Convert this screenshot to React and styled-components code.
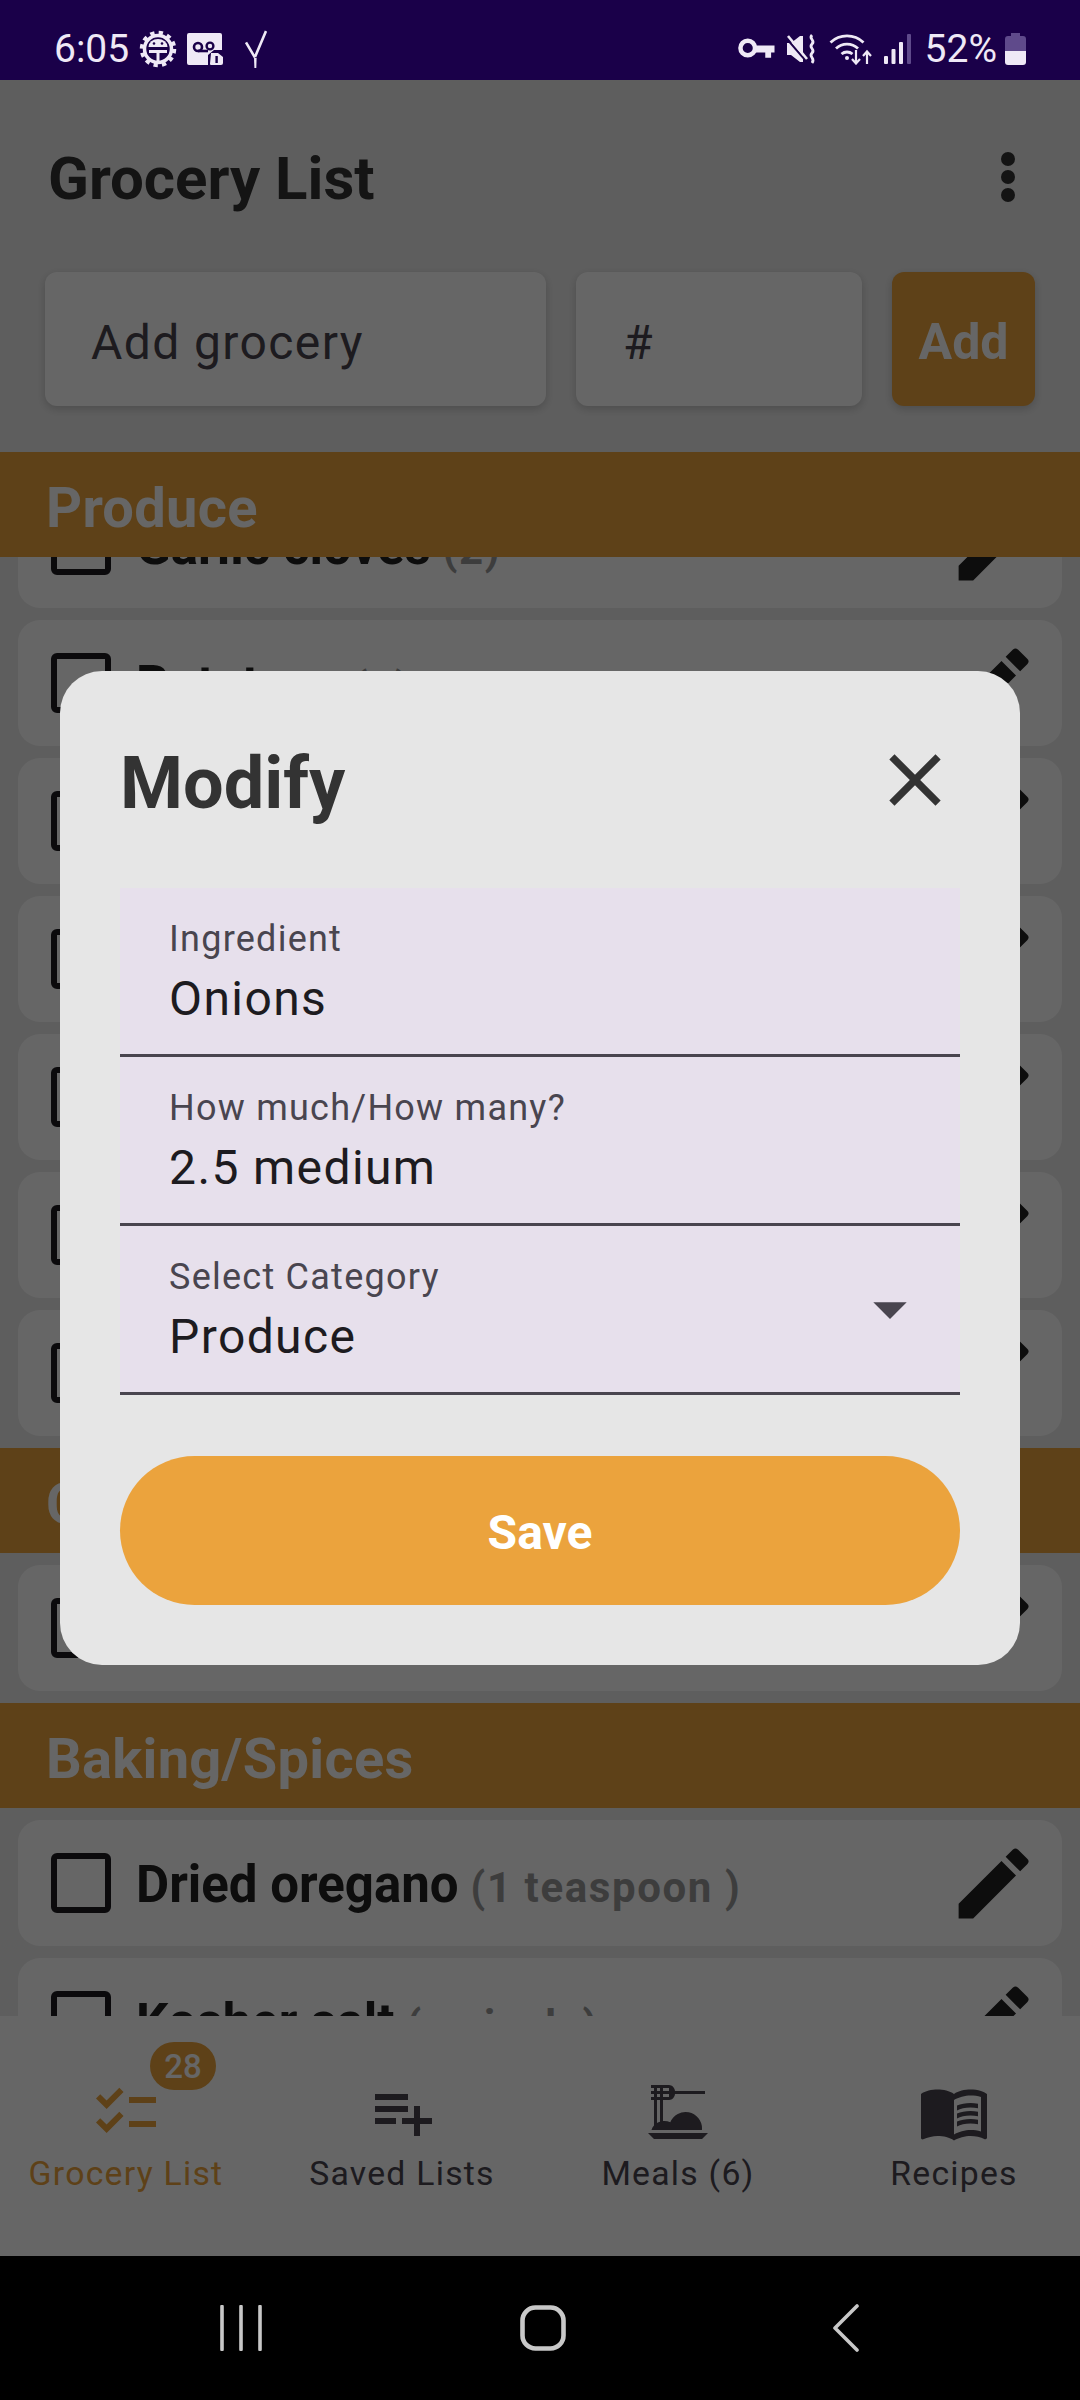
import React from 'react';
import styled, { createGlobalStyle } from 'styled-components';
import { MdChecklist, MdPlaylistAdd, MdDinnerDining, MdMenuBook, MdEdit, MdClose, MdArrowDropDown } from 'react-icons/md';

const GlobalStyle = createGlobalStyle`
  html, body { margin: 0; padding: 0; background: #000; }
  * { box-sizing: border-box; }
  body { font-family: Roboto, "Liberation Sans", sans-serif; }
`;

const Screen = styled.div`
  width: 1080px;
  height: 2400px;
  display: flex;
  flex-direction: column;
  overflow: hidden;
`;

const StatusBar = styled.div`
  height: 80px;
  flex: none;
  background: #1a0049;
  color: #efe9f6;
  font-size: 39px;
  display: flex;
  align-items: center;
  justify-content: space-between;
  padding: 18px 54px 0 54px;
`;

const StatusGroup = styled.div`
  display: flex;
  align-items: center;
  gap: ${(p) => p.$gap || 10}px;
  svg { display: block; flex: none; }
`;

const TickGap = styled.span`
  width: 2px;
`;

const Main = styled.div`
  position: relative;
  flex: 1;
  min-height: 0;
  display: flex;
  flex-direction: column;
  background: #ebebeb;
`;

const Header = styled.header`
  height: 192px;
  flex: none;
  display: flex;
  align-items: center;
  justify-content: space-between;
  padding: 0 65px 0 48px;
`;

const Title = styled.h1`
  margin: 4px 0 0;
  font-size: 60px;
  font-weight: 700;
  color: #333;
`;

const Dots = styled.div`
  display: flex;
  flex-direction: column;
  gap: 4px;
  margin-top: 2px;
  span {
    width: 14px;
    height: 14px;
    border-radius: 50%;
    background: #333;
  }
`;

const InputRow = styled.div`
  display: flex;
  gap: 30px;
  height: 134px;
  flex: none;
  padding: 0 45px;
  margin-bottom: 46px;
`;

const FakeInput = styled.div`
  width: ${(p) => p.$width}px;
  background: #fff;
  border-radius: 12px;
  box-shadow: 0 3px 8px rgba(0, 0, 0, 0.18);
  display: flex;
  align-items: center;
  padding: 7px 0 0 ${(p) => p.$pad}px;
  font-size: 48px;
  letter-spacing: 1.4px;
  color: #49454f;
`;

const AddButton = styled.button`
  width: 143px;
  border: 0;
  padding: 5px 0 0;
  border-radius: 12px;
  background: #eba33d;
  color: #fff;
  font: 700 50px Roboto, sans-serif;
  box-shadow: 0 3px 8px rgba(0, 0, 0, 0.18);
`;

const Scroller = styled.div`
  flex: 1;
  min-height: 0;
  overflow: hidden;
`;

const SectionHeader = styled.div`
  position: sticky;
  top: 0;
  z-index: 1;
  height: 105px;
  background: #eba33d;
  color: #fff;
  font-size: 56px;
  font-weight: 700;
  letter-spacing: 0.3px;
  display: flex;
  align-items: center;
  padding: 6px 0 0 46px;
`;

const Rows = styled.div`
  display: flex;
  flex-direction: column;
  gap: 12px;
  padding: 0 18px;
  margin-top: ${(p) => p.$top}px;
  margin-bottom: 12px;
`;

const Row = styled.div`
  height: 126px;
  flex: none;
  background: #fff;
  border-radius: 22px;
  display: flex;
  align-items: center;
  padding: 0 22px 0 33px;
`;

const Check = styled.span`
  width: 60px;
  height: 60px;
  flex: none;
  border: 6px solid #1d1b20;
  border-radius: 6px;
  margin-right: 25px;
`;

const ItemName = styled.span`
  margin-top: 3px;
  font-size: 51px;
  font-weight: 700;
  color: #222;
`;

const ItemAmount = styled.span`
  font-size: 42px;
  font-weight: 700;
  color: #999;
  letter-spacing: 1.6px;
  margin: 8px 0 0 12px;
`;

const EditIcon = styled(MdEdit)`
  margin-left: auto;
  font-size: 93px;
  color: #222;
  flex: none;
`;

const BottomNav = styled.nav`
  height: 240px;
  flex: none;
  background: #fff;
  display: flex;
  justify-content: space-between;
`;

const NavItem = styled.div`
  position: relative;
  width: 252px;
  display: flex;
  flex-direction: column;
  align-items: center;
  padding-top: 60px;
  color: ${(p) => (p.$active ? '#eba33d' : '#49454f')};
  font-size: 33.75px;
  letter-spacing: 1.25px;
  svg { display: block; font-size: 72px; }
`;

const NavLabel = styled.span`
  margin-top: 6px;
  line-height: 40px;
`;

const Badge = styled.span`
  position: absolute;
  left: 150px;
  top: 26px;
  width: 66px;
  height: 48px;
  border-radius: 24px;
  background: #eba33d;
  color: #fff;
  font-size: 33px;
  font-weight: 500;
  letter-spacing: 0;
  display: flex;
  align-items: center;
  justify-content: center;
`;

const Scrim = styled.div`
  position: absolute;
  inset: 0;
  z-index: 5;
  background: rgba(0, 0, 0, 0.6);
  display: flex;
  align-items: center;
  justify-content: center;
`;

const Dialog = styled.div`
  width: 960px;
  height: 994px;
  background: #e6e6e6;
  border-radius: 42px;
  padding: 60px;
  display: flex;
  flex-direction: column;
`;

const DialogTop = styled.div`
  height: 157px;
  flex: none;
  display: flex;
  justify-content: space-between;
  align-items: flex-start;
`;

const DialogTitle = styled.h2`
  margin: 12px 0 0;
  font-size: 72px;
  font-weight: 700;
  line-height: 82px;
  color: #333;
`;

const CloseIcon = styled(MdClose)`
  font-size: 88px;
  color: #333;
  margin: 5px 1px 0 0;
`;

const Field = styled.div`
  position: relative;
  height: 169px;
  flex: none;
  background: #e7e0ec;
  border-bottom: 3px solid #49454f;
  padding: 31px 50px 0 49px;
`;

const FieldLabel = styled.div`
  font-size: 36px;
  line-height: 40px;
  letter-spacing: 1.25px;
  color: #49454f;
`;

const FieldValue = styled.div`
  margin-top: 13px;
  font-size: 48px;
  line-height: 54px;
  letter-spacing: 1.4px;
  color: #1d1b20;
`;

const Arrow = styled(MdArrowDropDown)`
  position: absolute;
  right: 30px;
  top: 43px;
  font-size: 80px;
  color: #49454f;
`;

const SaveButton = styled.button`
  margin-top: 61px;
  height: 149px;
  flex: none;
  border: 0;
  padding: 3px 0 0;
  border-radius: 75px;
  background: #eba33d;
  color: #fff;
  font: 700 48px Roboto, sans-serif;
`;

const SystemNav = styled.div`
  height: 144px;
  flex: none;
  background: #000;
  display: flex;
  align-items: center;
  padding: 0 221px 0 220px;
  justify-content: space-between;
  svg { display: block; }
  svg:nth-child(2) { margin-right: 9px; }
`;

const BatteryText = styled.span`
  margin-left: 3px;
  margin-right: -3px;
`;

const fg = '#efe9f6';

function GearIcon() {
  return (
    <svg width="38" height="38" viewBox="0 0 38 38">
      <circle cx="19" cy="19" r="16" fill="none" stroke={fg} strokeWidth="4.5" strokeDasharray="4.2 4.2" />
      <circle cx="19" cy="19" r="13.5" fill="none" stroke={fg} strokeWidth="3.5" />
      <path d="M9.5 17a9.5 8 0 0 1 19 0z" fill={fg} />
      <circle cx="15" cy="13.5" r="1.3" fill="#1a0049" />
      <circle cx="23" cy="13.5" r="1.3" fill="#1a0049" />
      <path d="M10 20h18v3h-7.5v9h-3v-9H10z" fill={fg} />
    </svg>
  );
}

function VoicemailIcon() {
  return (
    <svg width="36" height="32" viewBox="0 0 36 32">
      <path d="M2 0h31a2 2 0 0 1 2 2v15H27l-6 5v10H2a2 2 0 0 1-2-2V2a2 2 0 0 1 2-2z" fill={fg} />
      <path d="M24 20h7l5 4v6a2 2 0 0 1-2 2H24a1 1 0 0 1-1-1z" fill={fg} />
      <circle cx="11" cy="14" r="4" fill="none" stroke="#1a0049" strokeWidth="2.6" />
      <circle cx="23" cy="13" r="3.4" fill="none" stroke="#1a0049" strokeWidth="2.4" />
      <path d="M11 18h10" stroke="#1a0049" strokeWidth="2.6" />
      <rect x="28.4" y="23" width="2.4" height="7" fill="#1a0049" />
    </svg>
  );
}

function TickIcon() {
  return (
    <svg width="22" height="38" viewBox="0 0 22 38">
      <path d="M1 12.5l9 15M21 1L10 27" fill="none" stroke={fg} strokeWidth="2.6" />
      <path d="M9 28h2.6l-.3 10H9.4z" fill={fg} />
    </svg>
  );
}

function KeyIcon() {
  return (
    <svg width="37" height="22" viewBox="0 0 38 22">
      <circle cx="10" cy="10" r="7.5" fill="none" stroke={fg} strokeWidth="4.6" />
      <path d="M17 7.5h20.5v7H34v5.5h-6v-5.5H17z" fill={fg} />
    </svg>
  );
}

function MuteIcon() {
  return (
    <svg width="32" height="32" viewBox="0 0 32 30">
      <path d="M1 9h4L14 2h3v26h-3l-9-7H1z" fill={fg} />
      <path d="M0 4l20 23" stroke="#1a0049" strokeWidth="2" />
      <path d="M2 2l19 23" stroke={fg} strokeWidth="2.6" />
      <path d="M26 1c-4 4 4 5 0 9s4 5 0 9 4 5 0 10" fill="none" stroke={fg} strokeWidth="2.8" />
    </svg>
  );
}

function WifiIcon() {
  return (
    <svg width="44" height="32" viewBox="0 0 44 32">
      <g fill="none" stroke={fg} strokeWidth="2.8">
        <path d="M1.5 9.5a24 24 0 0 1 33 0" />
        <path d="M7 15.5a16 16 0 0 1 22 0" />
        <path d="M12.5 21a8.5 8.5 0 0 1 11 0" />
      </g>
      <circle cx="18" cy="25" r="2" fill={fg} />
      <path d="M27 17v13M23 26l4 4.5 4-4.5M38 31V19M34 23l4-4.5 4 4.5" fill="none" stroke={fg} strokeWidth="2.2" />
    </svg>
  );
}

function SignalIcon() {
  return (
    <svg width="27" height="30" viewBox="0 0 27 30">
      <rect x="0" y="22" width="4" height="8" rx="1" fill={fg} />
      <rect x="7.5" y="15" width="4" height="15" rx="1" fill={fg} />
      <rect x="15" y="8" width="4" height="22" rx="1" fill={fg} />
      <rect x="23" y="0" width="4" height="30" rx="1" fill="#5f4a8b" />
    </svg>
  );
}

function BatteryIcon() {
  return (
    <svg width="21" height="32" viewBox="0 0 21 32">
      <path d="M6 0h9v3h3a3 3 0 0 1 3 3v12H0V6a3 3 0 0 1 3-3h3z" fill="#5f4a8b" />
      <path d="M0 18h21v11a3 3 0 0 1-3 3H3a3 3 0 0 1-3-3z" fill={fg} />
    </svg>
  );
}

function RecentsIcon() {
  return (
    <svg width="42" height="46" viewBox="0 0 42 46">
      <path d="M2 1.5v43M21 1.5v43M40 1.5v43" stroke="#c8c8c8" strokeWidth="3.6" strokeLinecap="round" />
    </svg>
  );
}

function HomeIcon() {
  return (
    <svg width="46" height="46" viewBox="0 0 46 46">
      <rect x="2.5" y="2.5" width="41" height="41" rx="13" fill="none" stroke="#c8c8c8" strokeWidth="4.6" />
    </svg>
  );
}

function BackIcon() {
  return (
    <svg width="26" height="48" viewBox="0 0 26 48">
      <path d="M24 2L2 24l22 22" fill="none" stroke="#c8c8c8" strokeWidth="3.6" strokeLinecap="round" strokeLinejoin="round" />
    </svg>
  );
}

const sections = [
  {
    title: 'Produce',
    top: -75,
    items: [
      ['Garlic cloves', '(2)'],
      ['Potatoes', '(4)'],
      ['Onions', '(2.5 medium )'],
      ['Carrots', '(3)'],
      ['Celery', '(2 stalks )'],
      ['Tomatoes', '(4)'],
      ['Lemons', '(2)'],
    ],
  },
  { title: 'Canned Goods', top: 12, items: [['Tomato paste', '(1 can )']] },
  {
    title: 'Baking/Spices',
    top: 12,
    items: [
      ['Dried oregano', '(1 teaspoon )'],
      ['Kosher salt', '(a pinch )'],
    ],
  },
];

const navItems = [
  { label: 'Grocery List', Icon: MdChecklist, active: true, badge: 28 },
  { label: 'Saved Lists', Icon: MdPlaylistAdd },
  { label: 'Meals (6)', Icon: MdDinnerDining },
  { label: 'Recipes', Icon: MdMenuBook },
];

const fields = [
  { label: 'Ingredient', value: 'Onions' },
  { label: 'How much/How many?', value: '2.5 medium' },
  { label: 'Select Category', value: 'Produce', select: true },
];

export default function App() {
  return (
    <Screen>
      <GlobalStyle />
      <StatusBar>
        <StatusGroup>
          <span>6:05</span>
          <GearIcon />
          <VoicemailIcon />
          <TickGap />
          <TickIcon />
        </StatusGroup>
        <StatusGroup $gap={11}>
          <KeyIcon />
          <MuteIcon />
          <WifiIcon />
          <SignalIcon />
          <BatteryText>52%</BatteryText>
          <BatteryIcon />
        </StatusGroup>
      </StatusBar>
      <Main>
        <Header>
          <Title>Grocery List</Title>
          <Dots><span /><span /><span /></Dots>
        </Header>
        <InputRow>
          <FakeInput $width={501} $pad={46}>Add grocery</FakeInput>
          <FakeInput $width={286} $pad={47}>#</FakeInput>
          <AddButton>Add</AddButton>
        </InputRow>
        <Scroller>
          {sections.map((section) => (
            <React.Fragment key={section.title}>
              <SectionHeader>{section.title}</SectionHeader>
              <Rows $top={section.top}>
                {section.items.map(([name, amount]) => (
                  <Row key={name}>
                    <Check />
                    <ItemName>{name}</ItemName>
                    <ItemAmount>{amount}</ItemAmount>
                    <EditIcon />
                  </Row>
                ))}
              </Rows>
            </React.Fragment>
          ))}
        </Scroller>
        <BottomNav>
          {navItems.map(({ label, Icon, active, badge }) => (
            <NavItem key={label} $active={active}>
              {badge && <Badge>{badge}</Badge>}
              <Icon />
              <NavLabel>{label}</NavLabel>
            </NavItem>
          ))}
        </BottomNav>
        <Scrim>
          <Dialog>
            <DialogTop>
              <DialogTitle>Modify</DialogTitle>
              <CloseIcon />
            </DialogTop>
            {fields.map((field) => (
              <Field key={field.label}>
                <FieldLabel>{field.label}</FieldLabel>
                <FieldValue>{field.value}</FieldValue>
                {field.select && <Arrow />}
              </Field>
            ))}
            <SaveButton>Save</SaveButton>
          </Dialog>
        </Scrim>
      </Main>
      <SystemNav>
        <RecentsIcon />
        <HomeIcon />
        <BackIcon />
      </SystemNav>
    </Screen>
  );
}
